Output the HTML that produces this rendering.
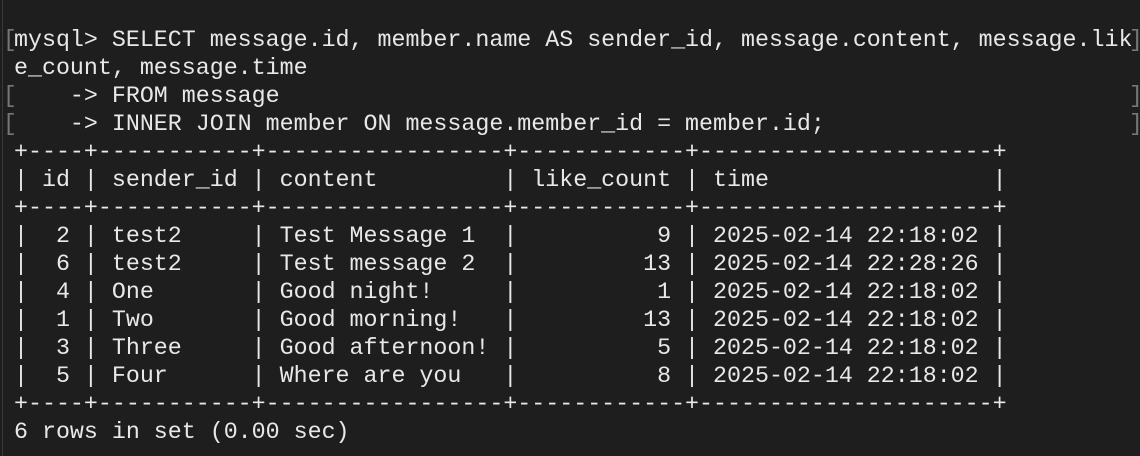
<!DOCTYPE html>
<html><head><style>
html,body{margin:0;padding:0;background:#1e1e1e;width:1140px;height:456px;overflow:hidden}
pre{position:absolute;left:14px;top:26px;margin:0;font-family:"Liberation Mono",monospace;font-size:23.3px;line-height:28px;color:#e8e8e8;letter-spacing:0}
.b{position:absolute;font-family:"Liberation Mono",monospace;font-size:23px;line-height:28px;color:#777}
.edge{position:absolute;left:2px;top:0;width:1px;height:456px;background:#3a3a3a}
</style></head><body>
<div class="edge"></div>
<div class="b" style="left:3px;top:26px">[</div>
<div class="b" style="left:3px;top:82px">[</div>
<div class="b" style="left:3px;top:110px">[</div>
<div class="b" style="left:1129px;top:26px">]</div>
<div class="b" style="left:1129px;top:82px">]</div>
<div class="b" style="left:1129px;top:110px">]</div>
<pre>mysql> SELECT message.id, member.name AS sender_id, message.content, message.lik
e_count, message.time
    -> FROM message
    -> INNER JOIN member ON message.member_id = member.id;
+----+-----------+-----------------+------------+---------------------+
| id | sender_id | content         | like_count | time                |
+----+-----------+-----------------+------------+---------------------+
|  2 | test2     | Test Message 1  |          9 | 2025-02-14 22:18:02 |
|  6 | test2     | Test message 2  |         13 | 2025-02-14 22:28:26 |
|  4 | One       | Good night!     |          1 | 2025-02-14 22:18:02 |
|  1 | Two       | Good morning!   |         13 | 2025-02-14 22:18:02 |
|  3 | Three     | Good afternoon! |          5 | 2025-02-14 22:18:02 |
|  5 | Four      | Where are you   |          8 | 2025-02-14 22:18:02 |
+----+-----------+-----------------+------------+---------------------+
6 rows in set (0.00 sec)</pre>
</body></html>
